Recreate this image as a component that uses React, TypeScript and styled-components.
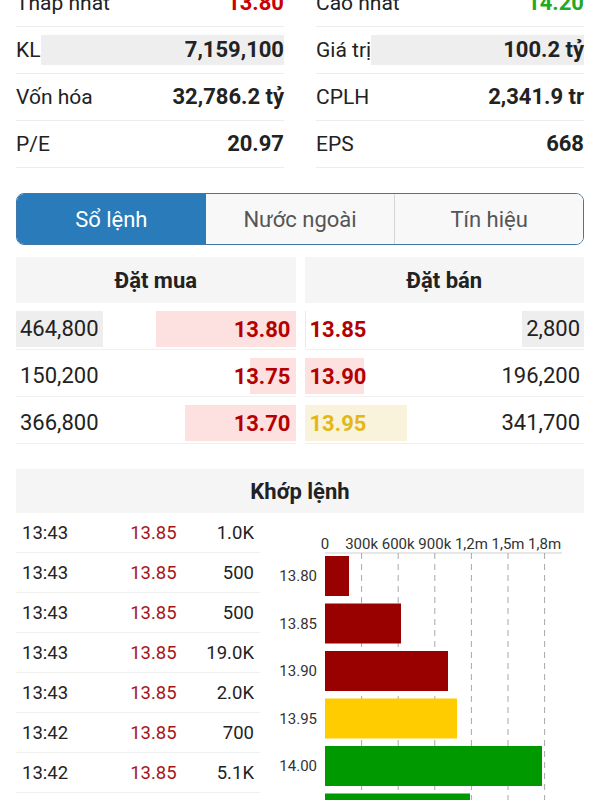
import React from 'react';
import styled, { createGlobalStyle } from 'styled-components';

const GlobalStyle = createGlobalStyle`
  html, body {
    margin: 0;
    padding: 0;
    overflow: hidden;
    background: #ffffff;
  }
  body {
    font-family: Roboto, 'Noto Sans', 'Liberation Sans', sans-serif;
    color: #222;
  }
`;

type Stat = { label: string; value: string; color?: string; flash?: boolean };

const stats: Stat[] = [
  { label: 'Thấp nhất', value: '13.80', color: '#cc0000' },
  { label: 'Cao nhất', value: '14.20', color: '#1faa1f' },
  { label: 'KL', value: '7,159,100', flash: true },
  { label: 'Giá trị', value: '100.2 tỷ', flash: true },
  { label: 'Vốn hóa', value: '32,786.2 tỷ' },
  { label: 'CPLH', value: '2,341.9 tr' },
  { label: 'P/E', value: '20.97' },
  { label: 'EPS', value: '668' },
];

type Order = { vol: string; price: string; bar: number; color: 'red' | 'yellow'; flash?: boolean };

const bids: Order[] = [
  { vol: '464,800', price: '13.80', bar: 140, color: 'red', flash: true },
  { vol: '150,200', price: '13.75', bar: 46, color: 'red' },
  { vol: '366,800', price: '13.70', bar: 111, color: 'red' },
];

const asks: Order[] = [
  { vol: '2,800', price: '13.85', bar: 1, color: 'red', flash: true },
  { vol: '196,200', price: '13.90', bar: 59, color: 'red' },
  { vol: '341,700', price: '13.95', bar: 102, color: 'yellow' },
];

const trades = [
  ['13:43', '13.85', '1.0K'],
  ['13:43', '13.85', '500'],
  ['13:43', '13.85', '500'],
  ['13:43', '13.85', '19.0K'],
  ['13:43', '13.85', '2.0K'],
  ['13:42', '13.85', '700'],
  ['13:42', '13.85', '5.1K'],
  ['13:42', '13.85', '1.2K'],
];

const chartRows = [
  { price: '13.80', w: 24, color: '#990000' },
  { price: '13.85', w: 76, color: '#990000' },
  { price: '13.90', w: 123, color: '#990000' },
  { price: '13.95', w: 132, color: '#ffcc00' },
  { price: '14.00', w: 217, color: '#009900' },
  { price: '14.05', w: 145, color: '#009900' },
];

const ticks = ['0', '300k', '600k', '900k', '1,2m', '1,5m', '1,8m'];

const PriceChart: React.FC = () => {
  const x0 = 65;
  const step = 36.6;
  const top = 40;
  return (
    <svg width="324" height="330" viewBox="0 0 324 330">
      {ticks.map((t, i) => (
        <text
          key={t}
          x={x0 + i * step}
          y={36}
          fontSize="15"
          textAnchor="middle"
          fill="#333"
          fontFamily="Roboto, sans-serif"
        >
          {t}
        </text>
      ))}
      <line x1={x0} y1={top} x2={302} y2={top} stroke="#cfcfcf" strokeWidth="1" />
      {ticks.slice(1).map((t, i) => (
        <line
          key={t}
          x1={x0 + (i + 1) * step}
          y1={top}
          x2={x0 + (i + 1) * step}
          y2={330}
          stroke="#a8a8a8"
          strokeWidth="1"
          strokeDasharray="6 5"
        />
      ))}
      {chartRows.map((r, i) => {
        const y = top + 3 + i * 47.5;
        return (
          <g key={r.price}>
            <rect x={x0} y={y} width={r.w} height={40} fill={r.color} />
            <text
              x={57}
              y={y + 25}
              fontSize="15"
              textAnchor="end"
              fill="#333"
              fontFamily="Roboto, sans-serif"
            >
              {r.price}
            </text>
          </g>
        );
      })}
    </svg>
  );
};

const App: React.FC = () => {
  return (
    <Page>
      <GlobalStyle />
      <StatsGrid>
        {stats.map((s) => (
          <StatRow key={s.label}>
            <StatLabel>{s.label}</StatLabel>
            <StatValue $color={s.color} $flash={s.flash}>{s.value}</StatValue>
          </StatRow>
        ))}
      </StatsGrid>

      <Tabs>
        <Tab $active>Sổ lệnh</Tab>
        <Tab>Nước ngoài</Tab>
        <Tab $divider>Tín hiệu</Tab>
      </Tabs>

      <OrderBook>
        <OrderColumn>
          <SectionHeader>Đặt mua</SectionHeader>
          {bids.map((o) => (
            <OrderRow key={o.price}>
              <OrderInner $bar={o.bar} $side="right" $color={o.color}>
                <OrderVol $flash={o.flash}>{o.vol}</OrderVol>
                <OrderPrice $color={o.color}>{o.price}</OrderPrice>
              </OrderInner>
            </OrderRow>
          ))}
        </OrderColumn>
        <OrderColumn>
          <SectionHeader>Đặt bán</SectionHeader>
          {asks.map((o) => (
            <OrderRow key={o.price}>
              <OrderInner $bar={o.bar} $side="left" $color={o.color}>
                <OrderPrice $color={o.color}>{o.price}</OrderPrice>
                <OrderVol $flash={o.flash}>{o.vol}</OrderVol>
              </OrderInner>
            </OrderRow>
          ))}
        </OrderColumn>
      </OrderBook>

      <MatchSection>
        <MatchHeader>Khớp lệnh</MatchHeader>
        <MatchBody>
          <TradeList>
            {trades.map((t, i) => (
              <TradeRow key={i}>
                <span>{t[0]}</span>
                <TradePrice>{t[1]}</TradePrice>
                <TradeVol>{t[2]}</TradeVol>
              </TradeRow>
            ))}
          </TradeList>
          <ChartBox>
            <PriceChart />
          </ChartBox>
        </MatchBody>
      </MatchSection>
    </Page>
  );
};

export default App;

const Page = styled.div`
  width: 600px;
  height: 800px;
  overflow: hidden;
  background: #fff;
`;

const StatsGrid = styled.div`
  display: grid;
  grid-template-columns: 1fr 1fr;
  column-gap: 32px;
  padding: 0 16px;
  margin-top: -20px;
`;

const StatRow = styled.div`
  height: 46px;
  display: flex;
  align-items: center;
  border-bottom: 1px solid #ececec;
`;

const StatLabel = styled.span`
  font-size: 21px;
  color: #222;
  white-space: nowrap;
`;

const StatValue = styled.span<{ $color?: string; $flash?: boolean }>`
  flex: 1;
  height: 30px;
  line-height: 30px;
  text-align: right;
  font-size: 22px;
  font-weight: 700;
  color: ${(p) => p.$color || '#222'};
  background: ${(p) => (p.$flash ? '#eeeeee' : 'transparent')};
  white-space: nowrap;
`;

const Tabs = styled.div`
  margin: 25px 16px 0;
  height: 52px;
  box-sizing: border-box;
  display: grid;
  grid-template-columns: 1fr 1fr 1fr;
  border: 1.5px solid #3f78a8;
  border-radius: 8px;
  overflow: hidden;
`;

const Tab = styled.div<{ $active?: boolean; $divider?: boolean }>`
  display: flex;
  align-items: center;
  justify-content: center;
  font-size: 22px;
  color: ${(p) => (p.$active ? '#ffffff' : '#555')};
  background: ${(p) => (p.$active ? '#2a7bb9' : '#f8f8f8')};
  border-left: ${(p) => (p.$divider ? '1px solid #d6d6d6' : 'none')};
`;

const OrderBook = styled.div`
  display: grid;
  grid-template-columns: 1fr 1fr;
  column-gap: 9px;
  padding: 0 16px;
  margin-top: 12px;
`;

const OrderColumn = styled.div`
  display: flex;
  flex-direction: column;
`;

const SectionHeader = styled.div`
  height: 46px;
  display: flex;
  align-items: center;
  justify-content: center;
  background: #f5f5f5;
  font-size: 22px;
  font-weight: 700;
  color: #222;
`;

const OrderRow = styled.div`
  padding: 8px 0 2px;
  border-bottom: 1px solid #f0f0f0;
`;

const OrderInner = styled.div<{ $bar: number; $side: 'left' | 'right'; $color: 'red' | 'yellow' }>`
  height: 36px;
  display: flex;
  align-items: center;
  justify-content: space-between;
  background-image: linear-gradient(
    ${(p) => (p.$color === 'yellow' ? '#faf3dc' : '#fde0e0')},
    ${(p) => (p.$color === 'yellow' ? '#faf3dc' : '#fde0e0')}
  );
  background-repeat: no-repeat;
  background-position: ${(p) => p.$side} center;
  background-size: ${(p) => p.$bar}px 100%;
`;

const OrderVol = styled.span<{ $flash?: boolean }>`
  height: 36px;
  line-height: 36px;
  padding: 0 4px;
  font-size: 22px;
  color: #222;
  background: ${(p) => (p.$flash ? '#eeeeee' : 'transparent')};
`;

const OrderPrice = styled.span<{ $color: 'red' | 'yellow' }>`
  padding: 0 5px;
  font-size: 22px;
  font-weight: 700;
  color: ${(p) => (p.$color === 'yellow' ? '#e3b816' : '#b30000')};
`;

const MatchSection = styled.div`
  margin: 25px 16px 0;
`;

const MatchHeader = styled.div`
  height: 44px;
  display: flex;
  align-items: center;
  justify-content: center;
  background: #f5f5f5;
  font-size: 22px;
  font-weight: 700;
  color: #222;
`;

const MatchBody = styled.div`
  display: flex;
  align-items: flex-start;
`;

const TradeList = styled.div`
  width: 244px;
  flex-shrink: 0;
`;

const TradeRow = styled.div`
  height: 39px;
  display: grid;
  grid-template-columns: 1fr 1fr 1fr;
  align-items: center;
  padding: 0 6px;
  border-bottom: 1px solid #f0f0f0;
  font-size: 18.5px;
  color: #222;
`;

const TradePrice = styled.span`
  text-align: right;
  color: #a8141c;
`;

const TradeVol = styled.span`
  text-align: right;
`;

const ChartBox = styled.div`
  flex: 1;
  display: flex;
`;
